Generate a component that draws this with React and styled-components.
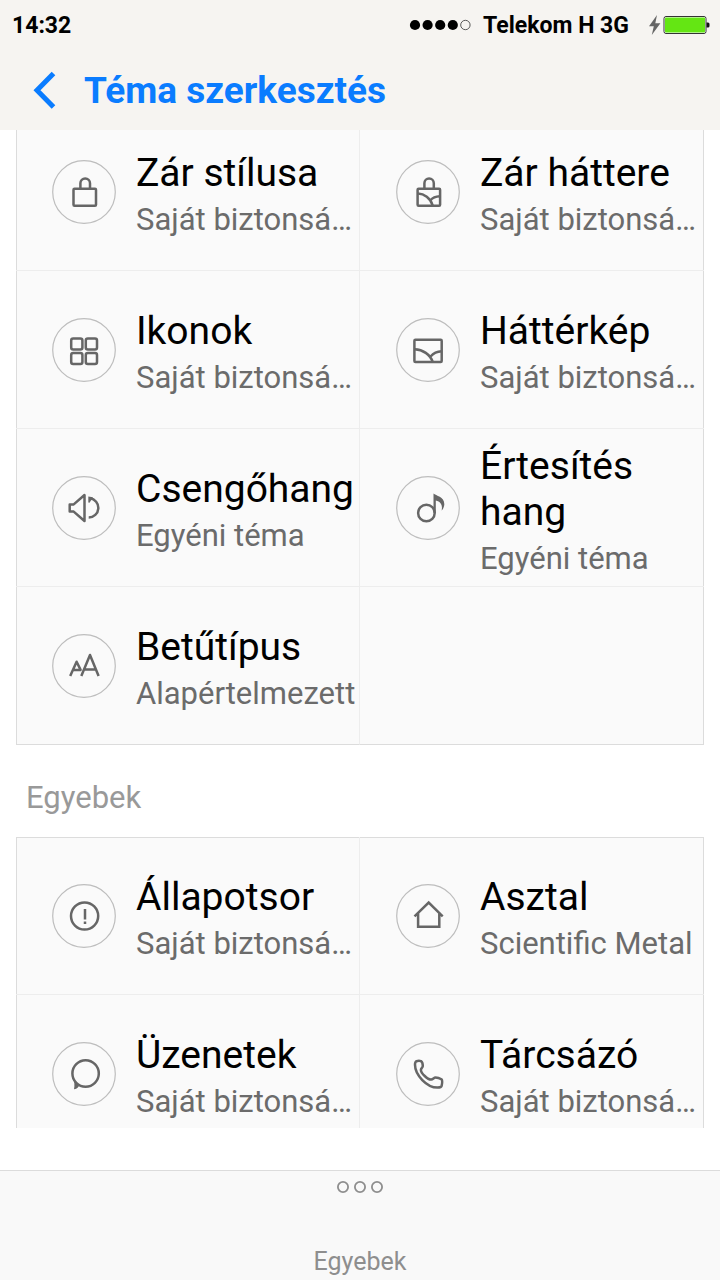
import { useLayoutEffect, useRef } from "react";
import styled, { createGlobalStyle } from "styled-components";

const GlobalStyle = createGlobalStyle`
  * {
    box-sizing: border-box;
  }
  body {
    margin: 0;
    background-color: #fff;
    font-family: Roboto, "Noto Sans", sans-serif;
  }
  button {
    font: inherit;
    color: inherit;
    border: none;
    background: none;
    padding: 0;
    cursor: pointer;
  }
`;

const Page = styled.div`
  height: 100vh;
  display: flex;
  flex-direction: column;
`;

const Header = styled.header`
  flex: none;
  background-color: #f6f4f1;
`;

const StatusBar = styled.div`
  display: flex;
  align-items: center;
  height: 50px;
  padding: 0 10px 0 12px;
  font-size: 23px;
  font-weight: 700;
  color: #000;
`;

const Carrier = styled.span`
  margin: 0 20px 0 12px;
`;

const Signal = styled.svg`
  margin-left: auto;
`;

const TitleBar = styled.div`
  display: flex;
  align-items: center;
  gap: 24px;
  height: 80px;
  padding: 2px 28px 0;
  color: #0a7cff;
`;

const BackButton = styled.button`
  display: flex;
  width: 32px;
  height: 48px;
  align-items: center;
`;

const Title = styled.h1`
  margin: 0;
  font-size: 37px;
  line-height: 48px;
  font-weight: 700;
`;

const Main = styled.main`
  flex: 1;
  min-height: 0;
  margin-bottom: 42px;
  padding: 0 16px;
  overflow-y: auto;
  scrollbar-width: none;
`;

const Panel = styled.section`
  display: grid;
  grid-template-columns: repeat(2, minmax(0, 1fr));
  grid-auto-rows: 158px;
  background-color: #fafafa;
  box-shadow: inset 0 0 0 1px #dcdcdc;
`;

const Cell = styled.button`
  display: flex;
  align-items: center;
  gap: 20px;
  padding-left: 36px;
  text-align: left;
  border-right: ${(props) => (props.$left ? "1px solid #ededed" : "none")};
  border-bottom: 1px solid ${(props) => (props.$last ? "transparent" : "#ededed")};
`;

const Circle = styled.svg`
  flex: none;
  width: 64px;
  height: 64px;
  fill: none;
  stroke: #666;
  stroke-width: 2.5;
  stroke-linejoin: round;
`;

const Texts = styled.span`
  flex: 1;
  min-width: 0;
  padding-top: 5px;
`;

const Name = styled.span`
  display: block;
  font-size: 39px;
  line-height: 46px;
  color: #000;
`;

const Source = styled.span`
  display: block;
  margin-top: 5px;
  font-size: 31px;
  line-height: 38px;
  color: #6b6b6b;
  white-space: nowrap;
`;

const SectionTitle = styled.h2`
  margin: 0;
  padding: 34px 10px 20px;
  font-size: 31px;
  line-height: 38px;
  font-weight: 400;
  color: #999;
`;

const Footer = styled.footer`
  flex: none;
  display: flex;
  justify-content: center;
  background-color: #f9f9f9;
  border-top: 1px solid #dcdcdc;
`;

const MoreButton = styled.button`
  display: flex;
  flex-direction: column;
  align-items: center;
  justify-content: space-between;
  height: 109px;
  padding-top: 9px;
  font-size: 25px;
  line-height: 36px;
  color: #8e8e8e;
`;

// every icon is drawn on a 64x64 canvas, inside the ring
const icons = {
  lock: (
    <>
      <rect x="21.5" y="28.7" width="22.5" height="17" rx="1" />
      <path d="M28.4 28.5v-5.3a4.8 4.8 0 0 1 9.6 0v5.3" />
    </>
  ),
  lockImage: (
    <>
      <rect x="21.6" y="28.7" width="22.5" height="17" rx="1" />
      <path d="M28.4 28.5v-5.3a4.7 4.7 0 0 1 9.4 0v5.3" />
      <path d="M22 33.5c6 .3 12.5 4.5 14.7 12M34.5 40.3c2-2.5 6-3.8 9.5-4" />
    </>
  ),
  grid: (
    <>
      <rect x="19.2" y="20.4" width="11.2" height="11.2" rx="2" />
      <rect x="33.8" y="20.4" width="11.2" height="11.2" rx="2" />
      <rect x="19.2" y="34.9" width="11.2" height="11.2" rx="2" />
      <rect x="33.8" y="34.9" width="11.2" height="11.2" rx="2" />
    </>
  ),
  image: (
    <>
      <rect x="18.4" y="21.8" width="27.3" height="22.3" rx="1" />
      <path d="M18.7 31.3c8 .3 15.5 5 18 12.7M34.8 38.3c2.5-3 7-4.8 11-5" />
    </>
  ),
  sound: (
    <>
      <path d="M17.7 28.4h4l10.8-9.4v26l-10.800-9.400h-4z" />
      <path d="M38 22.3a9.7 9.7 0 0 1-1.300 19.300" />
      <path d="M36.3 20.5v6l1.2.3 3.5-5.600z" fill="#666" stroke="none" />
    </>
  ),
  note: (
    <>
      <circle cx="30.4" cy="37" r="8.3" />
      <path
        d="M37.5 17.5C40 20 48.6 20.5 48.3 28.5C48.2 31 46.9 33.5 45.6 34.5C46.7 30 45.3 25.8 39.8 24.5V37H37.5z"
        fill="#666"
        stroke="none"
      />
    </>
  ),
  font: (
    <>
      <path d="M29.3 42l8.700-21 8.600 21M32.200 35.500h11.500" />
      <path d="M18.2 42l6.400-14.300 4 8.200H21.200" />
    </>
  ),
  alert: (
    <>
      <circle cx="32.6" cy="32" r="13.6" />
      <path d="M33 25v10.4M33 37.6v2.3" />
    </>
  ),
  home: (
    <path d="M18.500 32.400l14.200-13.800 14 13.800M22.100 29.500v13.300h21.200V29.500" strokeLinejoin="miter" />
  ),
  message: (
    <>
      <circle cx="33.6" cy="31.5" r="13.2" />
      <path d="M20.5 35.500c2 4 2.400 7.500 1.500 11.700 1.800-.1 3.500-1 5-3.200z" fill="#666" stroke="none" />
    </>
  ),
  phone: (
    <path d="M20.5 19.2c1.500-.5 3.500-.4 4.500-.1 1.300.8 1.800 3.700 1.800 5 0 1.600-1.900 2-1.900 3.800 0 3.200 6.800 9.900 10.300 9.700 1.800-.1 2.700-2 4.300-2 1.500 0 4.600.9 5.900 1.700 1 .9.800 4 .3 6.300-.4 1.600-2.800 2-4.300 2C31 45.600 19 33 19 22.800c0-1.300.2-3 1.500-3.600z" />
  ),
};

const saved = "Saját biztonsá…";

const themeParts = [
  { icon: "lock", name: "Zár stílusa", source: saved },
  { icon: "lockImage", name: "Zár háttere", source: saved },
  { icon: "grid", name: "Ikonok", source: saved },
  { icon: "image", name: "Háttérkép", source: saved },
  { icon: "sound", name: "Csengőhang", source: "Egyéni téma" },
  { icon: "note", name: "Értesítés hang", source: "Egyéni téma" },
  { icon: "font", name: "Betűtípus", source: "Alapértelmezett" },
];

const otherParts = [
  { icon: "alert", name: "Állapotsor", source: saved },
  { icon: "home", name: "Asztal", source: "Scientific Metal" },
  { icon: "message", name: "Üzenetek", source: saved },
  { icon: "phone", name: "Tárcsázó", source: saved },
];

const PartList = ({ parts }) => {
  const lastRow = Math.floor((parts.length - 1) / 2);

  return (
    <Panel>
      {parts.map((part, i) => (
        <Cell
          key={part.name}
          type="button"
          $left={i % 2 === 0}
          $last={Math.floor(i / 2) === lastRow}
        >
          <Circle viewBox="0 0 64 64" aria-hidden="true">
            <circle cx="32" cy="32" r="31.3" stroke="#bdbdbd" strokeWidth="1.2" />
            {icons[part.icon]}
          </Circle>
          <Texts>
            <Name>{part.name}</Name>
            <Source>{part.source}</Source>
          </Texts>
        </Cell>
      ))}
    </Panel>
  );
};

const App = () => {
  const mainRef = useRef(null);

  // the list opens slightly scrolled
  useLayoutEffect(() => {
    mainRef.current.scrollTop = 17;
  }, []);

  return (
    <Page>
      <GlobalStyle />
      <Header>
        <StatusBar>
          <span>14:32</span>
          <Signal width="62" height="12" viewBox="0 0 62 12" aria-hidden="true">
            <circle cx="6" cy="6" r="5.1" />
            <circle cx="18.6" cy="6" r="5.1" />
            <circle cx="31.2" cy="6" r="5.1" />
            <circle cx="43.8" cy="6" r="5.1" />
            <circle cx="56.4" cy="6" r="4.7" fill="none" stroke="#333" strokeWidth="0.8" />
          </Signal>
          <Carrier>Telekom H 3G</Carrier>
          <svg width="61" height="20" viewBox="0 0 61 20" aria-hidden="true">
            <path d="M8 0L0 11.2h4.800L2.800 20 11.400 8.200H6.300z" fill="#666" />
            <rect x="15" y="1.5" width="42" height="17" rx="2" fill="#fff" stroke="#333" />
            <rect x="16" y="2.5" width="40" height="15" rx="1" fill="#64e613" />
            <path d="M57.5 7.500h1.500a1.500 1.500 0 0 1 1.500 1.500v2a1.500 1.500 0 0 1-1.500 1.500h-1.500z" fill="#111" />
          </svg>
        </StatusBar>
        <TitleBar>
          <BackButton type="button" aria-label="Vissza">
            <svg width="32" height="40" viewBox="0 0 32 40" aria-hidden="true">
              <path d="M25.5 2.500L9 19.300l16.500 16.700" fill="none" stroke="currentColor" strokeWidth="5" />
            </svg>
          </BackButton>
          <Title>Téma szerkesztés</Title>
        </TitleBar>
      </Header>
      <Main ref={mainRef}>
        <PartList parts={themeParts} />
        <SectionTitle>Egyebek</SectionTitle>
        <PartList parts={otherParts} />
      </Main>
      <Footer>
        <MoreButton type="button">
          <svg width="48" height="14" viewBox="0 0 48 14" fill="none" stroke="#8e8e8e" strokeWidth="1.8" aria-hidden="true">
            <circle cx="7" cy="7" r="5.1" />
            <circle cx="24" cy="7" r="5.1" />
            <circle cx="41" cy="7" r="5.1" />
          </svg>
          Egyebek
        </MoreButton>
      </Footer>
    </Page>
  );
};

export default App;
